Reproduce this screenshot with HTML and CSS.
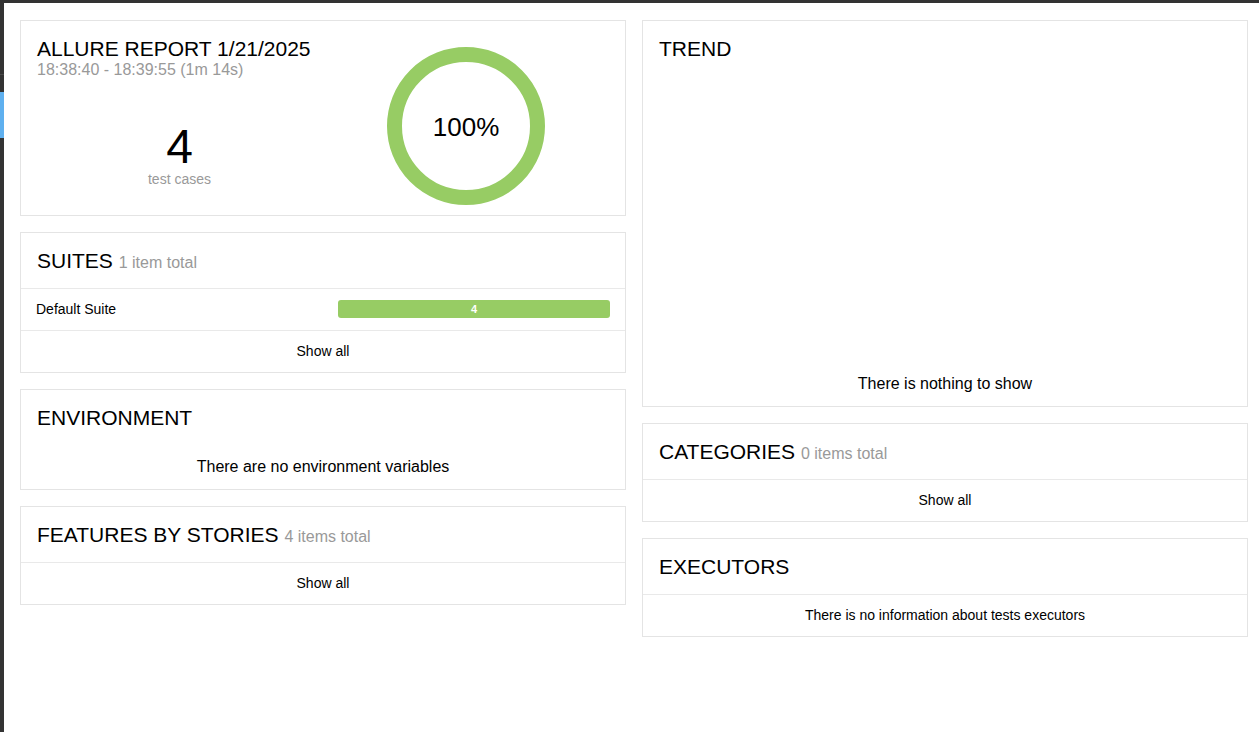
FILE: index.html
```html
<!DOCTYPE html>
<html lang="en">
<head>
<meta charset="utf-8">
<title>Allure Report</title>
<link rel="stylesheet" href="styles.css">
</head>
<body>
<div class="app">
  <aside class="side">
    <div class="side__top"></div>
    <div class="side__sep"></div>
    <div class="side__active"></div>
  </aside>
  <div class="page">
    <div class="topbar"></div>
    <main class="grid">
      <div class="col">
        <section class="card summary">
          <div class="summary__left">
            <div class="summary__head">
              <div class="summary__title">ALLURE REPORT 1/21/2025</div>
              <div class="summary__time">18:38:40 - 18:39:55 (1m 14s)</div>
            </div>
            <div class="summary__stats">
              <div class="summary__count">4</div>
              <div class="summary__label">test cases</div>
            </div>
          </div>
          <div class="summary__chart">
            <svg class="donut" width="158" height="158" viewBox="0 0 158 158">
              <circle cx="79" cy="79" r="71.5" fill="none" stroke="#97cc64" stroke-width="15"/>
              <text x="79" y="88.5" text-anchor="middle" class="donut__text">100%</text>
            </svg>
          </div>
        </section>

        <section class="card">
          <div class="card__head">SUITES <span class="card__meta">1 item total</span></div>
          <div class="row">
            <span class="row__name">Default Suite</span>
            <span class="bar"><span class="bar__val">4</span></span>
          </div>
          <div class="card__foot">Show all</div>
        </section>

        <section class="card">
          <div class="card__head">ENVIRONMENT</div>
          <div class="card__empty">There are no environment variables</div>
        </section>

        <section class="card">
          <div class="card__head">FEATURES BY STORIES <span class="card__meta">4 items total</span></div>
          <div class="card__foot">Show all</div>
        </section>
      </div>

      <div class="col">
        <section class="card">
          <div class="card__head">TREND</div>
          <div class="trend__body">There is nothing to show</div>
        </section>

        <section class="card">
          <div class="card__head">CATEGORIES <span class="card__meta">0 items total</span></div>
          <div class="card__foot">Show all</div>
        </section>

        <section class="card">
          <div class="card__head">EXECUTORS</div>
          <div class="card__foot">There is no information about tests executors</div>
        </section>
      </div>
    </main>
  </div>
</div>
</body>
</html>
```

FILE: styles.css
```css
* { box-sizing: border-box; }
html, body { margin: 0; padding: 0; background: #fff; }
body {
  font-family: "Liberation Sans", Arial, sans-serif;
  color: #000;
  width: 1259px;
  height: 732px;
  overflow: hidden;
}
.app { display: flex; height: 732px; }
.side {
  width: 4px;
  flex: 0 0 4px;
  background: #333333;
  display: flex;
  flex-direction: column;
}
.side__top { height: 74px; }
.side__sep { height: 1px; background: #4a4a4a; }
.side__active { height: 46px; margin-top: 17px; background: #5fb0ef; }
.page { flex: 1; display: flex; flex-direction: column; }
.topbar { height: 3px; background: #333333; }
.grid {
  display: grid;
  grid-template-columns: 1fr 1fr;
  column-gap: 16px;
  padding: 17px 11px 0 16px;
  align-items: start;
}
.col { display: flex; flex-direction: column; gap: 16px; }
.card {
  border: 1px solid #e4e4e4;
  background: #fff;
}
.card__head {
  padding: 15px 16px;
  font-size: 21px;
  line-height: 25px;
  height: 55px;
}
.card__meta { font-size: 16px; color: #999; }
.row {
  display: flex;
  align-items: center;
  border-top: 1px solid #e9e9e9;
  padding: 11px 15px 12px 15px;
  font-size: 14px;
  line-height: 18px;
}
.row__name { flex: 1; }
.bar {
  width: 272px;
  height: 18px;
  background: #97cc64;
  border-radius: 3px;
  display: flex;
  align-items: center;
  justify-content: center;
}
.bar__val { color: #fff; font-size: 11px; font-weight: bold; line-height: 18px; }
.card__foot {
  border-top: 1px solid #e9e9e9;
  padding: 12px 15px;
  font-size: 14px;
  line-height: 17px;
  text-align: center;
}
.card__empty {
  padding: 13px 15px;
  font-size: 16px;
  line-height: 18px;
  text-align: center;
}
.trend__body {
  height: 330px;
  display: flex;
  flex-direction: column;
  justify-content: flex-end;
  align-items: center;
  padding-bottom: 13px;
  font-size: 16px;
  line-height: 18px;
}
.summary { display: flex; height: 196px; }
.summary__left {
  width: 317px;
  display: flex;
  flex-direction: column;
}
.summary__head { padding: 15px 16px 0; }
.summary__title { font-size: 21px; line-height: 25px; }
.summary__time { font-size: 16px; line-height: 18px; color: #999; }
.summary__stats {
  flex: 1;
  display: flex;
  flex-direction: column;
  align-items: center;
  justify-content: center;
  padding-top: 16px;
}
.summary__count { font-size: 48px; line-height: 48px; }
.summary__label { font-size: 14px; line-height: 16px; color: #999; }
.summary__chart { flex: 1; padding: 26px 0 0 49px; }
.donut { display: block; }
.donut__text { font-family: "Liberation Sans", Arial, sans-serif; font-size: 26px; fill: #000; }
```
